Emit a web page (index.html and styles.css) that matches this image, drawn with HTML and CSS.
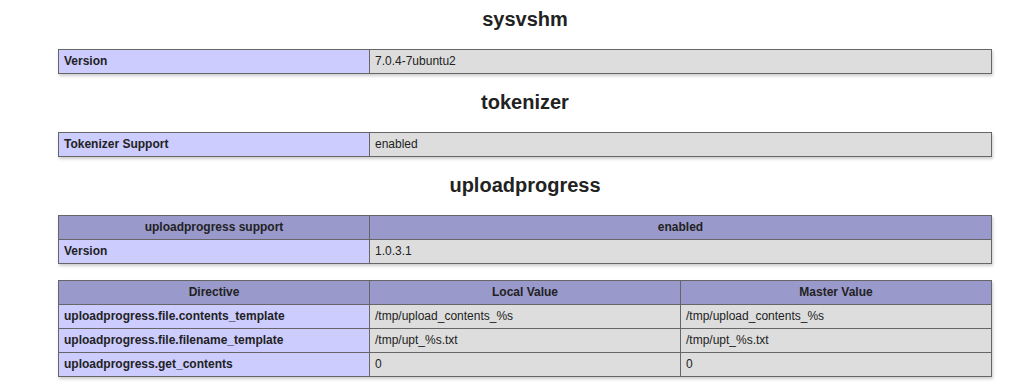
FILE: index.html
```html
<!DOCTYPE html>
<html lang="en">
<head>
    <meta charset="UTF-8">
    <meta name="viewport" content="width=device-width, initial-scale=1.0">
    <title>phpinfo()</title>
    <link rel="stylesheet" href="styles.css">
</head>
<body>

    <div class="center">

        <!-- sysvshm -->
        <h2>sysvshm</h2>
        <table>
            <tr><td class="e">Version </td><td class="v">7.0.4-7ubuntu2 </td></tr>
        </table>

        <!-- tokenizer -->
        <h2>tokenizer</h2>
        <table>
            <tr><td class="e">Tokenizer Support </td><td class="v">enabled </td></tr>
        </table>

        <!-- uploadprogress -->
        <h2>uploadprogress</h2>
        <table>
            <tr class="h"><th>uploadprogress support</th><th>enabled</th></tr>
            <tr><td class="e">Version </td><td class="v">1.0.3.1 </td></tr>
        </table>
        <table>
            <tr class="h"><th>Directive</th><th>Local Value</th><th>Master Value</th></tr>
            <tr><td class="e">uploadprogress.file.contents_template</td><td class="v">/tmp/upload_contents_%s</td><td class="v">/tmp/upload_contents_%s</td></tr>
            <tr><td class="e">uploadprogress.file.filename_template</td><td class="v">/tmp/upt_%s.txt</td><td class="v">/tmp/upt_%s.txt</td></tr>
            <tr><td class="e">uploadprogress.get_contents</td><td class="v">0</td><td class="v">0</td></tr>
        </table>

    </div>

</body>
</html>
```

FILE: styles.css
```css
body {
    background-color: #fff;
    color: #222;
    font-family: "Liberation Sans", Arial, sans-serif;
    margin: 0;
}
.center {
    width: 934px;
    margin-left: 58px;
    padding-top: 8px;
}
h2 {
    font-size: 20px;
    line-height: 23px;
    text-align: center;
    margin: 17.5px 0;
}
h2:first-child {
    margin-top: 0;
}
table {
    border-collapse: collapse;
    border: 0;
    width: 934px;
    margin: 16px 0;
    text-align: left;
    box-shadow: 1px 2px 3px #ccc;
}
td, th {
    border: 1px solid #666;
    font-size: 12px;
    line-height: 15px;
    vertical-align: baseline;
    padding: 4px 5px;
}
th {
    text-align: center;
}
.e {
    background-color: #ccf;
    width: 300px;
    font-weight: bold;
}
.h {
    background-color: #99c;
    font-weight: bold;
}
.v {
    background-color: #ddd;
    max-width: 300px;
    overflow-x: auto;
    word-wrap: break-word;
}
```
